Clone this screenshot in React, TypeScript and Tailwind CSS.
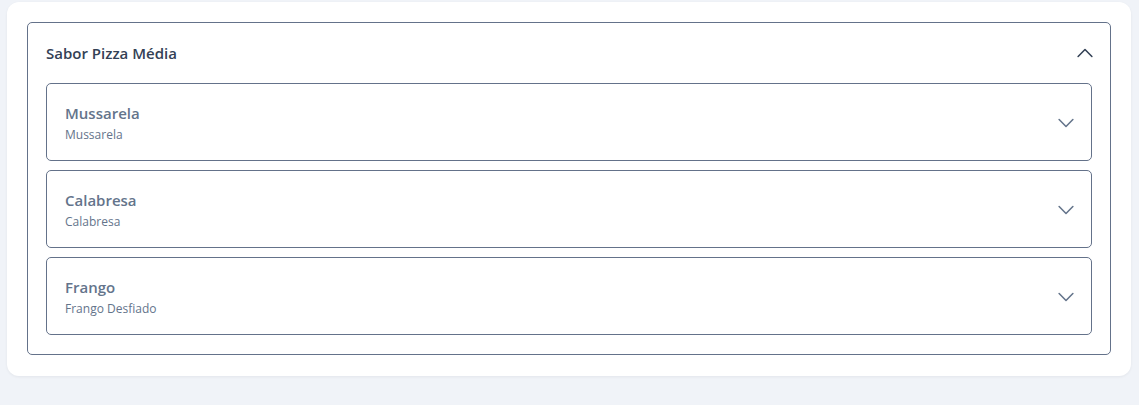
import React from "react";

const flavors = [
	{ name: "Mussarela", desc: "Mussarela" },
	{ name: "Calabresa", desc: "Calabresa" },
	{ name: "Frango", desc: "Frango Desfiado" },
];

const Chevron = ({ up, className }: { up?: boolean; className?: string }) => (
	<svg
		width="22"
		height="22"
		viewBox="0 0 24 24"
		fill="none"
		stroke="currentColor"
		strokeWidth={1.7}
		strokeLinecap="round"
		strokeLinejoin="round"
		className={className}
	>
		{up ? <path d="M4.5 15.75l7.5-7.5 7.5 7.5" /> : <path d="M19.5 8.25l-7.5 7.5-7.5-7.5" />}
	</svg>
);

const App = () => {
	return (
		<div
			className="min-h-[405px] w-full bg-[#f0f3f8] pl-[7px] pr-[8px] pt-[2px]"
			style={{ fontFamily: '"Open Sans", "Noto Sans", sans-serif' }}
		>
			<div className="rounded-[12px] bg-white p-[20px] pb-[21px] shadow-[0_1px_3px_rgba(15,23,42,0.06)]">
				<div className="rounded-[5px] border border-[#64728a] px-[18px] pb-[19px]">
					<div className="flex h-[60px] items-center justify-between">
						<span className="text-[15px] font-semibold text-[#334155]">Sabor Pizza Média</span>
						<Chevron up className="mr-[-4px] text-[#334155]" />
					</div>
					<div className="flex flex-col gap-[9px]">
						{flavors.map((f) => (
							<div
								key={f.name}
								className="flex items-center justify-between rounded-[5px] border border-[#64728a] px-[18px] pt-[17px] pb-[15px]"
							>
								<div className="flex flex-col">
									<span className="text-[15px] font-semibold leading-[24px] text-[#64748b]">{f.name}</span>
									<span className="text-[12px] leading-[20px] text-[#64748b]">{f.desc}</span>
								</div>
								<Chevron className="mr-[-4px] text-[#64748b]" />
							</div>
						))}
					</div>
				</div>
			</div>
		</div>
	);
};

export default App;
